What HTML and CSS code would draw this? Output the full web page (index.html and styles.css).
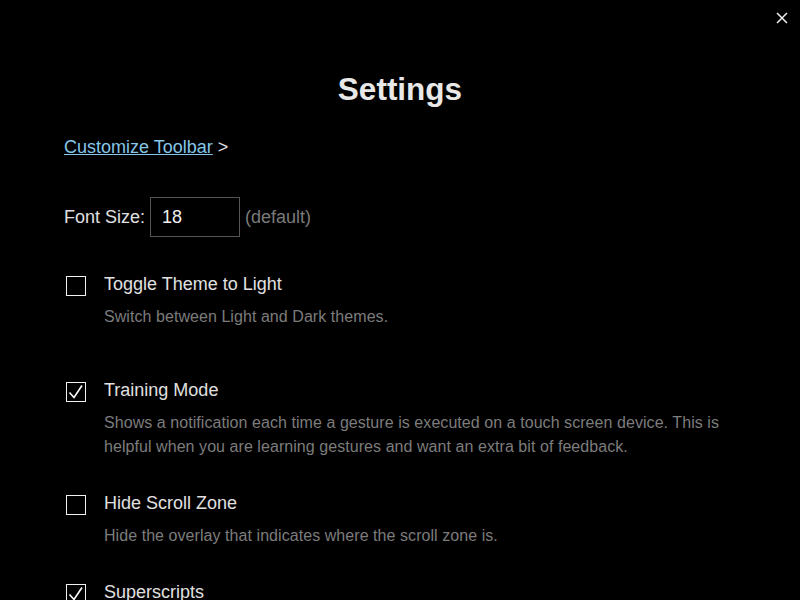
FILE: index.html
```html
<!DOCTYPE html>
<html lang="en">
<head>
    <meta charset="UTF-8">
    <meta name="viewport" content="width=device-width, initial-scale=1.0">
    <title>Settings</title>
    <link rel="stylesheet" href="styles.css">
</head>
<body>
    <button class="close" aria-label="Close">
        <svg width="12" height="12" viewBox="0 0 12 12">
            <path d="M1 1 L11 11 M11 1 L1 11" stroke="#eee" stroke-width="1.5" fill="none"/>
        </svg>
    </button>

    <div class="container">
        <h1>Settings</h1>

        <div class="toolbar-link">
            <a href="#">Customize Toolbar</a> &gt;
        </div>

        <div class="font-row">
            <label for="fontSize">Font Size:</label>
            <input id="fontSize" class="font-input" type="text" value="18">
            <span class="muted">(default)</span>
        </div>

        <div class="option first">
            <span class="check"></span>
            <div class="option-text">
                <div class="option-title">Toggle Theme to Light</div>
                <div class="option-desc">Switch between Light and Dark themes.</div>
            </div>
        </div>

        <div class="option">
            <span class="check checked">
                <svg width="20" height="20" viewBox="0 0 20 20">
                    <path d="M3.5 10.5 L8 15.5 L16 3.5" stroke="#fff" stroke-width="1.6" fill="none"/>
                </svg>
            </span>
            <div class="option-text">
                <div class="option-title">Training Mode</div>
                <div class="option-desc">Shows a notification each time a gesture is executed on a touch screen device. This is helpful when you are learning gestures and want an extra bit of feedback.</div>
            </div>
        </div>

        <div class="option">
            <span class="check"></span>
            <div class="option-text">
                <div class="option-title">Hide Scroll Zone</div>
                <div class="option-desc">Hide the overlay that indicates where the scroll zone is.</div>
            </div>
        </div>

        <div class="option">
            <span class="check checked">
                <svg width="20" height="20" viewBox="0 0 20 20">
                    <path d="M3.5 10.5 L8 15.5 L16 3.5" stroke="#fff" stroke-width="1.6" fill="none"/>
                </svg>
            </span>
            <div class="option-text">
                <div class="option-title">Superscripts</div>
                <div class="option-desc">Show superscript numbers in the text.</div>
            </div>
        </div>
    </div>
</body>
</html>
```

FILE: styles.css
```css
html, body {
    margin: 0;
    background-color: #000;
}
body {
    font-family: "Liberation Sans", Arial, sans-serif;
    color: #e0e0e0;
    font-size: 18px;
    overflow: hidden;
    height: 600px;
}
.close {
    position: absolute;
    top: 12px;
    right: 12px;
    width: 12px;
    height: 12px;
    padding: 0;
    border: none;
    background: none;
    cursor: pointer;
}
.close svg {
    display: block;
}
.container {
    padding: 71px 64px 0 64px;
}
h1 {
    margin: 0;
    text-align: center;
    font-size: 31.5px;
    line-height: 36px;
    color: #e8e8e8;
}
.toolbar-link {
    margin-top: 28px;
    line-height: 24px;
    color: #e0e0e0;
}
.toolbar-link a {
    color: #86c6e8;
}
.font-row {
    margin-top: 38px;
    display: flex;
    align-items: center;
    gap: 5px;
}
.font-input {
    width: 90px;
    height: 40px;
    box-sizing: border-box;
    padding: 0 11px;
    background: #000;
    color: #f0f0f0;
    border: 1px solid #555;
    font-family: inherit;
    font-size: 18px;
}
.muted {
    color: #7a7a7a;
}
.option {
    display: flex;
    gap: 18px;
    margin-top: 35px;
}
.option.first + .option {
    margin-top: 49px;
}
.option + .option {
    margin-top: 32px;
}
.check {
    flex: none;
    width: 20px;
    height: 20px;
    box-sizing: border-box;
    border: 1px solid #f0f0f0;
    margin-left: 2px;
    margin-top: 4px;
    position: relative;
}
.check svg {
    position: absolute;
    left: -1px;
    top: -1px;
}
.option-title {
    line-height: 24px;
    color: #e0e0e0;
}
.option-desc {
    margin-top: 9px;
    font-size: 16px;
    line-height: 24px;
    letter-spacing: 0.06px;
    color: #7c7c7c;
}
```
